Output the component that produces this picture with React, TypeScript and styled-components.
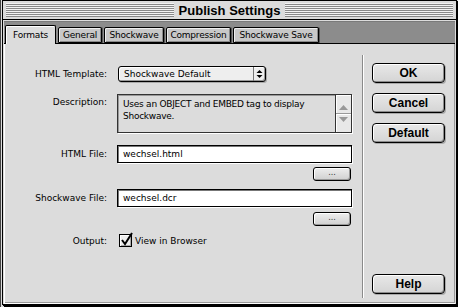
import React from "react";
import styled, { createGlobalStyle } from "styled-components";

const Global = createGlobalStyle`
  html, body { margin: 0; padding: 0; background: #dcdcdc; }
  body { width: 458px; height: 307px; overflow: hidden; font-family: "DejaVu Sans", sans-serif; }
  #root { width: 458px; height: 307px; }
`;

const Screen = styled.div`
  width: 458px;
  height: 307px;
  display: flex;
  padding-left: 2px;
  box-sizing: border-box;
  background: linear-gradient(to right, #444 0 1px, #dcdcdc 1px);
`;

const Window = styled.div`
  width: 453px;
  height: 303px;
  border: 1px solid #000;
  box-shadow: 1px 1px 0 #000, 2px 2px 0 #000;
  display: flex;
  flex-direction: column;
  background: #dcdcdc;
`;

const TitleBar = styled.div`
  height: 19px;
  flex: none;
  box-sizing: border-box;
  padding: 2px 3px 2px 3px;
  border-bottom: 1px solid #000;
  background: #dcdcdc;
  display: flex;
`;

const Stripes = styled.div`
  flex: 1;
  display: flex;
  justify-content: center;
  align-items: center;
  background: repeating-linear-gradient(
    to bottom,
    #f4f4f4 0 1px,
    #8a8a8a 1px 2px
  );
`;

const Title = styled.div`
  background: #dcdcdc;
  padding: 0 5px;
  font-family: "Liberation Sans", Arial, sans-serif;
  font-weight: bold;
  font-size: 13px;
  line-height: 15px;
  color: #000;
`;

const Body = styled.div`
  flex: 1;
  display: flex;
  flex-direction: column;
  padding: 1px 1px 0 1px;
  min-height: 0;
`;

const TabStrip = styled.div`
  height: 22px;
  flex: none;
  background: #8c8c8c;
  border-bottom: 1px solid #000;
  display: flex;
  align-items: flex-end;
  gap: 2px;
  padding-left: 1px;
  box-shadow: inset 0 1px 0 #7a7a7a;
`;

const Tab = styled.div<{ $active?: boolean; $w: number }>`
  box-sizing: border-box;
  width: ${(p) => p.$w}px;
  height: ${(p) => (p.$active ? "19px" : "16px")};
  margin-bottom: ${(p) => (p.$active ? "-1px" : "0")};
  padding-top: ${(p) => (p.$active ? "3px" : "1px")};
  background: ${(p) => (p.$active ? "#dcdcdc" : "#c8c8c8")};
  border: 1px solid #000;
  border-bottom: ${(p) => (p.$active ? "none" : "1px solid #000")};
  border-radius: 2px 2px 0 0;
  box-shadow: ${(p) =>
    p.$active
      ? "inset 1px 1px 0 #fff"
      : "inset 1px 1px 0 #eee, inset -1px -1px 0 #8a8a8a, 1px 0 0 #555"};
  font-size: 9px;
  line-height: 13px;
  letter-spacing: -0.2px;
  text-align: center;
  color: #000;
  white-space: nowrap;
`;

const Panel = styled.div`
  flex: 1;
  display: flex;
  min-height: 0;
  box-shadow: inset 1px 0 0 #fff, inset -1px 0 0 #9a9a9a, inset 0 -1px 0 #9a9a9a;
  border-bottom: 1px solid #fff;
`;

const FormCol = styled.div`
  width: 357px;
  flex: none;
  display: flex;
  flex-direction: column;
  padding-left: 1px;
`;

const Row = styled.div<{ $top: number }>`
  display: flex;
  align-items: center;
  margin-top: ${(p) => p.$top}px;
`;

const TopRow = styled(Row)`
  align-items: flex-start;
`;

const Label = styled.div<{ $pad?: number }>`
  width: 102px;
  flex: none;
  text-align: right;
  font-size: 9px;
  color: #000;
  padding-top: ${(p) => p.$pad ?? 0}px;
  margin-right: 10px;
  white-space: nowrap;
`;

const Popup = styled.div`
  width: 148px;
  height: 16px;
  margin-left: 1px;
  box-sizing: border-box;
  border: 1px solid #000;
  border-radius: 3px;
  background: #eeeeee;
  box-shadow: inset 1px 1px 0 #fff, inset -1px -1px 0 #999, 1px 1px 0 #aaa;
  display: flex;
  align-items: center;
  font-size: 9px;
`;

const PopupText = styled.div`
  flex: 1;
  padding-left: 5px;
`;

const PopupArrow = styled.div`
  width: 12px;
  height: 100%;
  border-left: 1px solid #777;
  box-sizing: border-box;
  display: flex;
  align-items: center;
  justify-content: center;
`;

const DescBox = styled.div`
  width: 235px;
  height: 39px;
  box-sizing: border-box;
  border: 1px solid #333;
  background: #dcdcdc;
  box-shadow: inset 1px 1px 0 #999, 1px 1px 0 #fff;
  display: flex;
`;

const DescText = styled.div`
  flex: 1;
  padding: 3px 5px;
  font-size: 9px;
  line-height: 12px;
  letter-spacing: -0.25px;
  color: #000;
`;

const ScrollBar = styled.div`
  width: 15px;
  flex: none;
  border-left: 1px solid #333;
  display: flex;
  flex-direction: column;
`;

const ScrollArrow = styled.div<{ $down?: boolean }>`
  flex: 1;
  background: #e8e8e8;
  display: flex;
  justify-content: center;
  align-items: ${(p) => (p.$down ? "flex-start" : "flex-end")};
  padding: 3px 0;
  border-top: ${(p) => (p.$down ? "1px solid #999" : "none")};
  box-shadow: inset 1px 1px 0 #fff;
`;

const TextInput = styled.div`
  width: 235px;
  height: 18px;
  box-sizing: border-box;
  border: 1px solid #000;
  box-shadow: inset 1px 1px 0 #777, 1px 1px 0 #fff;
  background: #fff;
  font-size: 9px;
  line-height: 16px;
  padding-left: 5px;
  color: #000;
`;

const BrowseLine = styled.div<{ $top: number }>`
  display: flex;
  justify-content: flex-end;
  width: 346px;
  margin-top: ${(p) => p.$top}px;
`;

const SmallButton = styled.div`
  width: 38px;
  height: 14px;
  box-sizing: border-box;
  border: 1px solid #000;
  border-radius: 3px;
  background: linear-gradient(#eee, #d0d0d0);
  box-shadow: inset 1px 1px 0 #fff, inset -1px -1px 0 #999;
  display: flex;
  align-items: center;
  justify-content: center;
  font-size: 8px;
  line-height: 8px;
  color: #333;
  padding-bottom: 3px;
`;

const Check = styled.div`
  width: 13px;
  height: 13px;
  box-sizing: border-box;
  border: 1px solid #000;
  background: #eee;
  box-shadow: inset 1px 1px 0 #fff, inset -1px -1px 0 #aaa;
  margin-left: 2px;
  position: relative;
`;

const CheckMark = styled.svg`
  position: absolute;
  left: 0px;
  top: -3px;
`;

const CheckLabel = styled.span`
  font-size: 9px;
  margin-left: 3px;
  color: #000;
`;

const Separator = styled.div`
  width: 1px;
  flex: none;
  margin: 11px 0 5px 0;
  background: #8a8a8a;
  box-shadow: 1px 0 0 #fff;
`;

const ButtonCol = styled.div`
  flex: 1;
  display: flex;
  flex-direction: column;
  gap: 10px;
  padding: 19px 0 9px 9px;
`;

const Button = styled.div`
  width: 73px;
  height: 20px;
  box-sizing: border-box;
  border: 1px solid #000;
  border-radius: 4px;
  background: linear-gradient(#e8e8e8, #d4d4d4);
  box-shadow: inset 1px 1px 0 #fff, inset -1px -1px 0 #8c8c8c, 1px 1px 0 #aaa;
  display: flex;
  align-items: center;
  justify-content: center;
  font-family: "Liberation Sans", Arial, sans-serif;
  font-weight: bold;
  font-size: 12px;
  color: #000;
`;

const HelpButton = styled(Button)`
  margin-top: auto;
`;

const tabs: { label: string; w: number }[] = [
  { label: "Formats", w: 51 },
  { label: "General", w: 44 },
  { label: "Shockwave", w: 60 },
  { label: "Compression", w: 65 },
  { label: "Shockwave Save", w: 86 },
];

export default function App() {
  return (
    <>
      <Global />
      <Screen>
        <Window>
          <TitleBar>
            <Stripes>
              <Title>Publish Settings</Title>
            </Stripes>
          </TitleBar>
          <Body>
            <TabStrip>
              {tabs.map((t, i) => (
                <Tab key={t.label} $active={i === 0} $w={t.w}>
                  {t.label}
                </Tab>
              ))}
            </TabStrip>
            <Panel>
              <FormCol>
                <Row $top={22}>
                  <Label>HTML Template:</Label>
                  <Popup>
                    <PopupText>Shockwave Default</PopupText>
                    <PopupArrow>
                      <svg width="7" height="10" viewBox="0 0 7 10">
                        <path d="M3.5 1 L6.5 4 L0.5 4 Z" fill="#000" />
                        <path d="M0.5 6 L6.5 6 L3.5 9 Z" fill="#000" />
                      </svg>
                    </PopupArrow>
                  </Popup>
                </Row>
                <TopRow $top={12}>
                  <Label $pad={3}>Description:</Label>
                  <DescBox>
                    <DescText>
                      Uses an OBJECT and EMBED tag to display Shockwave.
                    </DescText>
                    <ScrollBar>
                      <ScrollArrow>
                        <svg width="9" height="5" viewBox="0 0 9 5">
                          <path d="M4.5 0 L9 5 L0 5 Z" fill="#999" />
                        </svg>
                      </ScrollArrow>
                      <ScrollArrow $down>
                        <svg width="9" height="5" viewBox="0 0 9 5">
                          <path d="M0 0 L9 0 L4.5 5 Z" fill="#999" />
                        </svg>
                      </ScrollArrow>
                    </ScrollBar>
                  </DescBox>
                </TopRow>
                <Row $top={12}>
                  <Label>HTML File:</Label>
                  <TextInput>wechsel.html</TextInput>
                </Row>
                <BrowseLine $top={4}>
                  <SmallButton>...</SmallButton>
                </BrowseLine>
                <Row $top={8}>
                  <Label>Shockwave File:</Label>
                  <TextInput>wechsel.dcr</TextInput>
                </Row>
                <BrowseLine $top={5}>
                  <SmallButton>...</SmallButton>
                </BrowseLine>
                <Row $top={8}>
                  <Label>Output:</Label>
                  <Check>
                    <CheckMark width="14" height="15" viewBox="0 0 14 15">
                      <path
                        d="M2 8 L5 12 L12 1"
                        stroke="#000"
                        strokeWidth="2"
                        fill="none"
                      />
                    </CheckMark>
                  </Check>
                  <CheckLabel>View in Browser</CheckLabel>
                </Row>
              </FormCol>
              <Separator />
              <ButtonCol>
                <Button>OK</Button>
                <Button>Cancel</Button>
                <Button>Default</Button>
                <HelpButton>Help</HelpButton>
              </ButtonCol>
            </Panel>
          </Body>
        </Window>
      </Screen>
    </>
  );
}
